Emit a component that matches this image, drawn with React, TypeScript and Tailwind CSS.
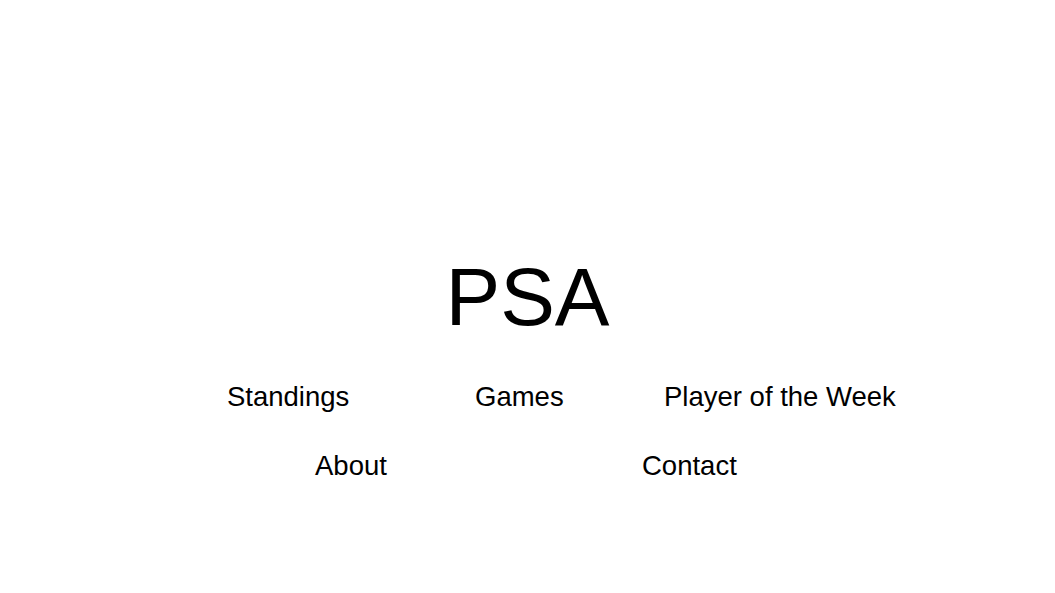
const App = () => {
  return (
    <div className="min-h-screen w-full bg-white text-black font-['Liberation_Sans',Arial,sans-serif]">
      <div className="flex flex-col pt-[256px]">
        <h1 className="text-center text-[82px] leading-none font-normal">PSA</h1>
        <nav className="mt-[45px] flex flex-col gap-[41.5px] text-[27.5px] leading-none">
          <div className="flex pl-[227px]">
            <a className="w-[248px]">Standings</a>
            <a className="w-[189px]">Games</a>
            <a>Player of the Week</a>
          </div>
          <div className="flex pl-[315px]">
            <a className="w-[327px]">About</a>
            <a>Contact</a>
          </div>
        </nav>
      </div>
    </div>
  );
};

export default App;
